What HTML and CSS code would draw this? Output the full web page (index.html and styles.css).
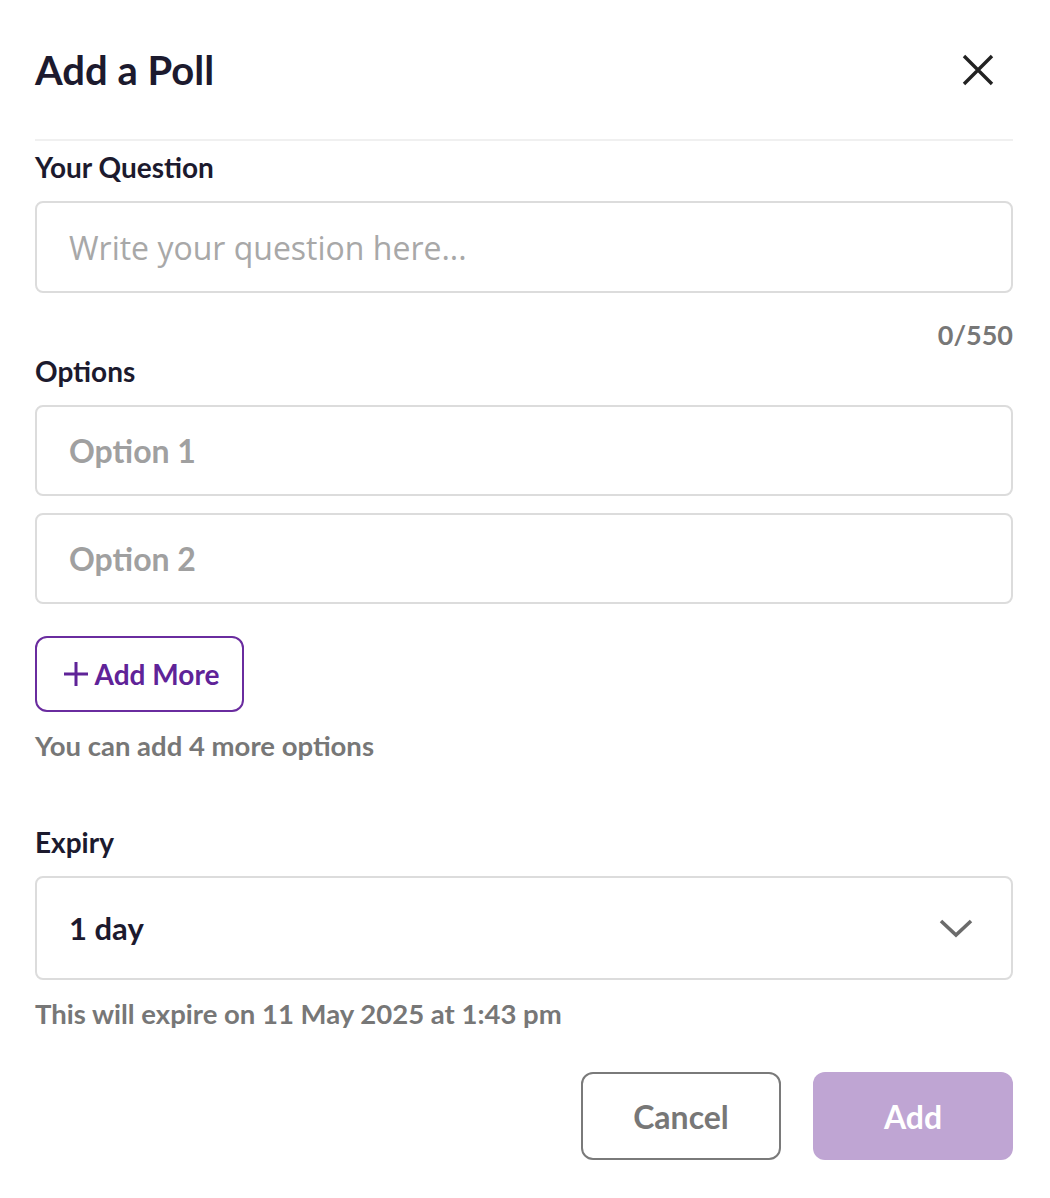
FILE: index.html
```html
<!DOCTYPE html>
<html lang="en">
<head>
<meta charset="utf-8">
<title>Add a Poll</title>
<link rel="stylesheet" href="styles.css">
</head>
<body>
<div class="modal">
  <header class="head">
    <h1 class="title">Add a Poll</h1>
    <button class="close" aria-label="Close">
      <svg width="34" height="34" viewBox="0 0 34 34"><path d="M3 3 L31 31 M31 3 L3 31" stroke="#222" stroke-width="3.4" stroke-linecap="butt" fill="none"/></svg>
    </button>
  </header>
  <div class="divider"></div>

  <label class="label">Your Question</label>
  <div class="field question"><span class="ph-q">Write your question here...</span></div>
  <div class="counter">0/550</div>

  <label class="label">Options</label>
  <div class="options">
    <div class="field option"><span class="ph-o">Option 1</span></div>
    <div class="field option"><span class="ph-o">Option 2</span></div>
  </div>

  <button class="add-more">
    <svg width="28" height="28" viewBox="0 0 28 28"><path d="M14 2 V26 M2 14 H26" stroke="#5f2398" stroke-width="3" fill="none"/></svg>
    <span>Add More</span>
  </button>
  <p class="hint">You can add 4 more options</p>

  <label class="label expiry-label">Expiry</label>
  <div class="field select">
    <span class="sel-value">1 day</span>
    <svg width="34" height="20" viewBox="0 0 34 20"><path d="M2 3 L17 17 L32 3" stroke="#6b6b6b" stroke-width="3.6" fill="none"/></svg>
  </div>
  <p class="hint expire">This will expire on 11 May 2025 at 1:43 pm</p>

  <div class="actions">
    <button class="btn cancel">Cancel</button>
    <button class="btn add">Add</button>
  </div>
</div>
</body>
</html>
```

FILE: styles.css
```css
* { box-sizing: border-box; }
html, body { margin: 0; padding: 0; background: #fff; }
body { font-family: "Lato", "Liberation Sans", sans-serif; color: #1c1a2e; }

.modal {
  width: 1050px;
  padding: 0 37px 0 35px;
  display: flex;
  flex-direction: column;
}

.head {
  display: flex;
  align-items: center;
  justify-content: space-between;
  height: 139px;
}
.title {
  margin: 0;
  font-size: 40px;
  font-weight: 700;
  color: #1c1a2e;
  line-height: 1;
}
.close {
  border: 0;
  background: none;
  padding: 0;
  margin-right: 18px;
  width: 34px;
  height: 34px;
  display: flex;
}
.divider { height: 2px; background: #f0f0f0; }

.label {
  display: block;
  font-size: 28px;
  font-weight: 700;
  color: #1c1a2e;
  line-height: 32px;
}
.divider + .label { margin-top: 10px; }

.field {
  border: 2px solid #dcdcdc;
  border-radius: 8px;
  background: #fff;
  display: flex;
  align-items: center;
  padding: 0 32px;
}
.question { height: 92px; margin-top: 18px; }
.ph-q {
  font-family: "Open Sans", "Liberation Sans", sans-serif;
  font-size: 32px;
  color: #a8a8a8;
}
.counter {
  text-align: right;
  font-size: 27px;
  font-weight: 700;
  color: #777;
  line-height: 32px;
  margin-top: 26px;
}
.counter + .label { margin-top: 4px; }

.options { display: flex; flex-direction: column; gap: 17px; margin-top: 18px; }
.option { height: 91px; }
.ph-o { font-size: 32px; font-weight: 700; color: #a0a0a0; }

.add-more {
  align-self: flex-start;
  margin-top: 32px;
  width: 209px;
  height: 76px;
  border: 2px solid #6a2c9f;
  border-radius: 12px;
  background: #fff;
  display: flex;
  align-items: center;
  justify-content: center;
  gap: 5px;
  padding: 0 0 0 2px;
  font-family: "Lato", "Liberation Sans", sans-serif;
  font-size: 28px;
  font-weight: 700;
  color: #5f2398;
}
.hint {
  margin: 18px 0 0;
  font-size: 27.5px;
  font-weight: 700;
  color: #777;
  line-height: 32px;
}
.expiry-label { margin-top: 64px; }

.select {
  height: 104px;
  margin-top: 18px;
  justify-content: space-between;
  padding-right: 38px;
}
.sel-value { font-size: 31px; font-weight: 700; color: #1c1a2e; }
.expire { margin-top: 18px; }

.actions {
  display: flex;
  justify-content: flex-end;
  gap: 32px;
  margin-top: 42px;
}
.btn {
  width: 200px;
  height: 88px;
  border-radius: 12px;
  font-family: "Lato", "Liberation Sans", sans-serif;
  font-size: 32px;
  font-weight: 700;
}
.cancel { background: #fff; border: 2px solid #7a7a7a; color: #777; }
.add { background: #bfa5d3; border: 0; color: #fff; }
```
